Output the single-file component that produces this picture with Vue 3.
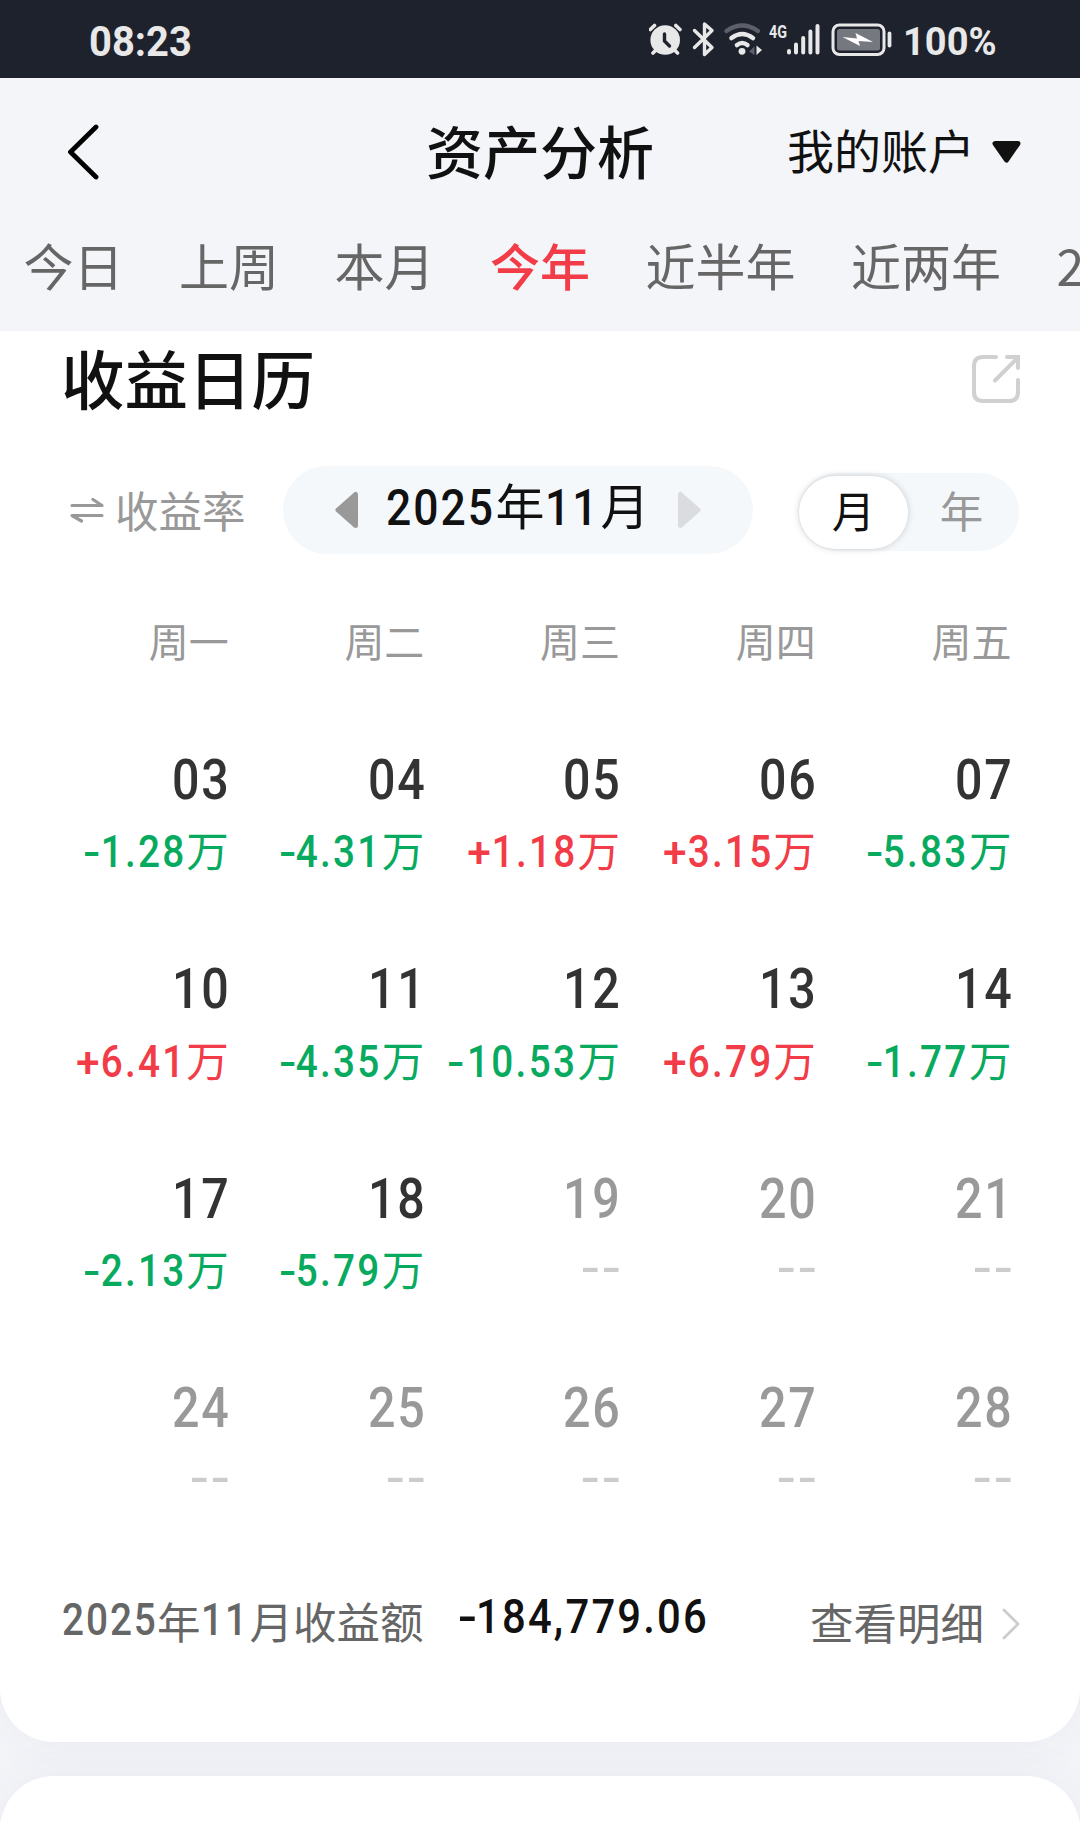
<template>
  <div class="page">
    <div class="status-bar">
      <span class="status-time">08:23</span>
      <div class="status-right">
        <svg class="status-icons" width="244" height="36" viewBox="650 21 244 36" fill="none" stroke-linecap="round">
          <!-- 闹钟 -->
          <g stroke="#e8e8e8">
            <circle cx="666.2" cy="40" r="14.8" fill="#e8e8e8" stroke="none" />
            <path d="M651.3 29.5l4.2-4M681 29.500l-4.200-4M654 53l3-3M678.500 53l-3-3" stroke-width="3.6" />
            <path d="M665.500 34v7l5 5" stroke="#1e222d" stroke-width="3.4" />
          </g>
          <!-- 蓝牙 -->
          <path d="M695.5 30.500l17.500 17-7.500 7V24l7.500 6.500L695.500 47.500" stroke="#e8e8e8" stroke-width="3.4" stroke-linejoin="round" />
          <!-- WiFi -->
          <path d="M727.5 31q15.700-11 31.400 0" stroke="#5c5f69" stroke-width="4.4" />
          <path d="M732.500 38q10.700-8 21.400 0M738 45q5.200-4 10.400 0" stroke="#e8e8e8" stroke-width="4.6" />
          <circle cx="743" cy="51.3" r="3.4" fill="#e8e8e8" />
          <path d="M755.500 46.500v8.500l-5.500-3.500z" fill="#5c5f69" />
          <path d="M757.5 45.500v9.500l5.500-5z" fill="#e8e8e8" />
          <!-- 移动信号 -->
          <text class="net-type" x="770" y="38" fill="#e8e8e8" textLength="18" lengthAdjust="spacingAndGlyphs">4G</text>
          <path d="M790 51v1.500M797 44.500v8M804.200 38v14.500M811.400 31.500v21M818.500 26v26.500" stroke="#e8e8e8" stroke-width="4" />
          <!-- 电池 -->
          <rect x="834" y="25" width="51" height="29.5" rx="6.5" stroke="#e8e8e8" stroke-width="3" />
          <rect x="838" y="29" width="43" height="21.5" rx="2.5" fill="#76787f" />
          <path d="M890.5 33.5v12" stroke="#e8e8e8" stroke-width="3.8" />
          <path d="M843.5 37l14.500 1.500-1.500-5.500 17.500 9-14.500-1 1.500 5z" fill="#fff" />
        </svg>
        <span class="status-percent">100%</span>
      </div>
    </div>

    <header class="nav-bar">
      <svg class="back-icon" width="34" height="58" viewBox="0 0 34 58" fill="none">
        <path d="M31 4L5.500 29 31 54" stroke="#000" stroke-width="4.8" stroke-linecap="round" stroke-linejoin="round" />
      </svg>
      <h1 class="nav-title">资产分析</h1>
      <div class="account">
        <span>我的账户</span>
        <svg width="29" height="22" viewBox="0 0 29 22">
          <path d="M3 2.500h23L14.500 19z" fill="#111" stroke="#111" stroke-width="5" stroke-linejoin="round" />
        </svg>
      </div>
    </header>

    <nav class="tabs">
      <span
        v-for="tab in tabs"
        :key="tab"
        class="tab"
        :class="{ active: tab === activeTab }"
        @click="activeTab = tab"
      >{{ tab }}</span>
    </nav>

    <section class="card calendar-card">
      <div class="card-head">
        <h2 class="card-title">收益日历</h2>
        <svg class="share-icon" width="48" height="48" viewBox="0 0 48 48" fill="none" stroke="#d0d0d0" stroke-width="4">
          <path d="M24 2H11Q2 2 2 11v26q0 9 9 9h26q9 0 9-9V25" stroke-linecap="round" />
          <path d="M23 25.500L45 3.500M35 2h11v11" stroke-linecap="round" />
        </svg>
      </div>

      <div class="controls">
        <div class="rate-switch">
          <svg width="34" height="26" viewBox="0 0 34 26" fill="none" stroke="#999" stroke-width="3.2" stroke-linecap="round" stroke-linejoin="round">
            <path d="M2 8.500h30L23 2.500M32 18.500H2l9.500 5.500" />
          </svg>
          <span>收益率</span>
        </div>
        <div class="month-picker">
          <svg width="23" height="38" viewBox="0 0 23 38">
            <path d="M20.500 3.500v31L3 19z" fill="#999" stroke="#999" stroke-width="5" stroke-linejoin="round" />
          </svg>
          <div class="month-text">
            <span class="num-box year"><span class="num">2025</span></span>
            <span>年</span>
            <span class="num-box month"><span class="num">11</span></span>
            <span>月</span>
          </div>
          <svg width="23" height="38" viewBox="0 0 23 38">
            <path d="M2.500 3.500v31L20 19z" fill="#dbdce0" stroke="#dbdce0" stroke-width="5" stroke-linejoin="round" />
          </svg>
        </div>
        <div class="mode-toggle">
          <span
            v-for="mode in modes"
            :key="mode"
            class="mode"
            :class="{ selected: mode === activeMode }"
            @click="activeMode = mode"
          >{{ mode }}</span>
        </div>
      </div>

      <div class="week-head">
        <span v-for="name in weekdays" :key="name">{{ name }}</span>
      </div>

      <div class="days">
        <div v-for="item in days" :key="item.day" class="day" :class="dayState(item)">
          <div class="day-number"><span class="num">{{ item.day }}</span></div>
          <div v-if="item.profit" class="profit">
            <span class="sign">{{ item.profit[0] }}</span><span class="num">{{ item.profit.slice(1) }}</span><span>万</span>
          </div>
          <div v-else class="profit"><span class="dashes">--</span></div>
        </div>
      </div>

      <div class="summary">
        <div class="summary-label">
          <span class="num-box year"><span class="num">2025</span></span>
          <span>年</span>
          <span class="num-box month"><span class="num">11</span></span>
          <span>月收益额</span>
        </div>
        <div class="summary-total"><span class="sign">-</span><span class="num">184,779.06</span></div>
        <div class="detail-link">
          <span>查看明细</span>
          <svg width="18" height="32" viewBox="0 0 18 32" fill="none">
            <path d="M2 2l14 14L2 30" stroke="#ccc" stroke-width="2.8" stroke-linecap="round" stroke-linejoin="round" />
          </svg>
        </div>
      </div>
    </section>

    <section class="card next-card"></section>
  </div>
</template>

<script setup>
import { ref } from 'vue'

const tabs = ['今日', '上周', '本月', '今年', '近半年', '近两年', '2024']
const activeTab = ref('今年')

const modes = ['月', '年']
const activeMode = ref('月')

const weekdays = ['周一', '周二', '周三', '周四', '周五']

// 单位：万，没有数据的日期 profit 为空
const days = [
  { day: '03', profit: '-1.28' },
  { day: '04', profit: '-4.31' },
  { day: '05', profit: '+1.18' },
  { day: '06', profit: '+3.15' },
  { day: '07', profit: '-5.83' },
  { day: '10', profit: '+6.41' },
  { day: '11', profit: '-4.35' },
  { day: '12', profit: '-10.53' },
  { day: '13', profit: '+6.79' },
  { day: '14', profit: '-1.77' },
  { day: '17', profit: '-2.13' },
  { day: '18', profit: '-5.79' },
  { day: '19' },
  { day: '20' },
  { day: '21' },
  { day: '24' },
  { day: '25' },
  { day: '26' },
  { day: '27' },
  { day: '28' }
]

const dayState = (item) => {
  if (!item.profit) return 'empty'
  return item.profit.startsWith('+') ? 'up' : 'down'
}
</script>

<style>
body {
  margin: 0;
  background: #f4f5f9;
}
</style>

<style scoped>
.page {
  width: 1080px;
  height: 1821px;
  overflow: hidden;
  background: #f4f5f9;
  color: #111;
  font-family: 'Noto Sans CJK SC', sans-serif;
}

svg {
  display: block;
  flex: none;
}

/* 数字使用窄体效果 */
.num {
  display: inline-block;
  font-family: Roboto, sans-serif;
  font-weight: 500;
  line-height: 1;
  white-space: nowrap;
  transform: scaleX(0.88);
  transform-origin: right center;
}

.num-box {
  flex: none;
}

.num-box .num {
  transform-origin: left center;
}

.status-bar {
  display: flex;
  justify-content: space-between;
  align-items: center;
  box-sizing: border-box;
  height: 78px;
  padding: 0 84px 0 89px;
  background: #1e222d;
  color: #e8e8e8;
  font-family: Roboto, sans-serif;
  font-weight: 700;
}

.status-time {
  font-size: 42px;
  line-height: 78px;
  padding-top: 5px;
  transform: scaleX(0.95);
  transform-origin: left center;
}

.status-right {
  display: flex;
  align-items: center;
  gap: 10px;
}

.status-percent {
  width: 93px;
  font-size: 39px;
  line-height: 78px;
  padding-top: 5px;
  transform: scaleX(0.975);
  transform-origin: left center;
}

.net-type {
  font-family: Roboto, sans-serif;
  font-size: 19px;
  font-weight: 700;
}

.nav-bar {
  display: grid;
  grid-template-columns: 1fr auto 1fr;
  align-items: center;
  height: 142px;
  padding: 0 59px 0 65px;
}

.back-icon {
  margin-top: 6px;
}

.nav-title {
  margin: 0 3px 0 -3px;
  font-size: 57px;
  font-weight: 500;
  line-height: 80px;
}

.account {
  display: flex;
  justify-content: flex-end;
  align-items: center;
  gap: 17px;
  font-size: 47px;
  line-height: 80px;
}

.account svg {
  margin-top: 6px;
}

.tabs {
  display: flex;
  gap: 55.5px;
  height: 111px;
  padding-left: 23.5px;
  color: #666;
  font-size: 50px;
  line-height: 89px;
  white-space: nowrap;
}

.tab {
  flex: none;
}

.tab.active {
  color: #f23c48;
  font-weight: 500;
}

.card {
  background: #fff;
  box-shadow: 0 0 50px rgba(60, 70, 110, 0.06);
}

.calendar-card {
  box-sizing: border-box;
  height: 1411px;
  border-radius: 0 0 54px 54px;
  clip-path: inset(0 0 -80px 0);
}

.card-head {
  display: flex;
  justify-content: space-between;
  align-items: center;
  height: 86px;
  padding: 0 60px 0 61px;
}

.card-title {
  margin: 0;
  padding-top: 3px;
  font-size: 63.5px;
  font-weight: 500;
  line-height: 86px;
}

.share-icon {
  margin-top: 9px;
}

.controls {
  display: flex;
  align-items: center;
  height: 88px;
  margin-top: 49px;
  padding: 0 61px 0 70px;
}

.rate-switch {
  display: flex;
  align-items: center;
  gap: 11px;
  width: 213px;
  color: #999;
  font-size: 43.5px;
  line-height: 86px;
}

.month-picker {
  display: flex;
  align-items: center;
  justify-content: space-between;
  box-sizing: border-box;
  width: 470px;
  height: 88px;
  padding: 0 52px;
  border-radius: 44px;
  background: #f4f8fb;
}

.month-text {
  display: flex;
  align-items: baseline;
  margin-bottom: 12px;
  font-size: 49px;
  line-height: 76px;
}

.month-text .num {
  font-size: 50.5px;
  letter-spacing: 2.3px;
}

.month-text .year {
  width: 109px;
}

.month-text .month {
  width: 56px;
}

.mode-toggle {
  display: flex;
  align-items: center;
  width: 221px;
  height: 78px;
  margin: 4px 0 0 auto;
  border-radius: 39px;
  background: #f4f8fb;
}

.mode {
  width: 105px;
  height: 73px;
  margin-left: 1px;
  border-radius: 37px;
  color: #999;
  font-size: 43.5px;
  line-height: 67px;
  text-align: center;
}

.mode.selected {
  width: 109px;
  background: #fff;
  box-shadow: 0 0 7px rgba(0, 0, 0, 0.18);
  color: #111;
}

.week-head,
.days {
  display: grid;
  grid-template-columns: repeat(5, 195.7px);
  padding-left: 33px;
  text-align: right;
}

.week-head {
  margin-top: 56px;
  color: #999;
  font-size: 40px;
  line-height: 61px;
}

.days {
  row-gap: 79.5px;
  margin-top: 79px;
}

.day {
  height: 130px;
  color: #333;
  white-space: nowrap;
}

.day-number {
  display: flex;
  justify-content: flex-end;
  align-items: center;
  height: 60px;
}

.day-number .num {
  font-size: 55px;
  letter-spacing: 2.1px;
  margin-right: -2px;
}

.profit {
  display: flex;
  justify-content: flex-end;
  align-items: baseline;
  margin-top: 7px;
  font-size: 42.5px;
  line-height: 64px;
}

.profit .num {
  font-size: 44px;
  letter-spacing: 2.6px;
  /* 抵消横向压缩留下的空白 */
  margin-left: -11px;
}

.sign,
.dashes {
  display: inline-block;
  font-family: Roboto, sans-serif;
  font-weight: 500;
  line-height: 1;
}

.down .sign,
.summary-total .sign {
  transform: scaleX(1.2);
  transform-origin: 70% center;
}

.up .profit {
  color: #f23c48;
}

.down .profit {
  color: #08aa5f;
}

.empty {
  color: #999;
}

.empty .profit {
  margin-top: 17px;
  color: #ccc;
}

.dashes {
  margin-right: -3px;
  font-size: 44px;
  letter-spacing: 1.4px;
  transform: scaleX(1.28);
  transform-origin: right center;
}

.summary {
  display: flex;
  align-items: center;
  margin-top: 79px;
  padding: 0 60px 0 62px;
  line-height: 60px;
}

.summary-label {
  display: flex;
  align-items: baseline;
  width: 398px;
  padding-top: 3px;
  color: #666;
  font-size: 43.5px;
  white-space: nowrap;
}

/* 数字比汉字略高 */
.summary-label .num {
  padding-bottom: 3px;
  font-size: 44px;
  letter-spacing: 2.2px;
  transform: translateY(-4px) scaleX(0.88);
}

.summary-label .year {
  width: 95px;
}

.summary-label .month {
  width: 49px;
}

.summary-total {
  margin-top: -14px;
  white-space: nowrap;
  font-size: 47.5px;
}

.summary-total .num {
  letter-spacing: 2.5px;
  transform-origin: left center;
}

.detail-link {
  display: flex;
  align-items: center;
  gap: 18px;
  margin-left: auto;
  padding-top: 4px;
  color: #666;
  font-size: 43.5px;
}

.detail-link svg {
  margin-top: 5px;
}

.next-card {
  height: 100px;
  margin-top: 34px;
  border-radius: 54px 54px 0 0;
}
</style>
